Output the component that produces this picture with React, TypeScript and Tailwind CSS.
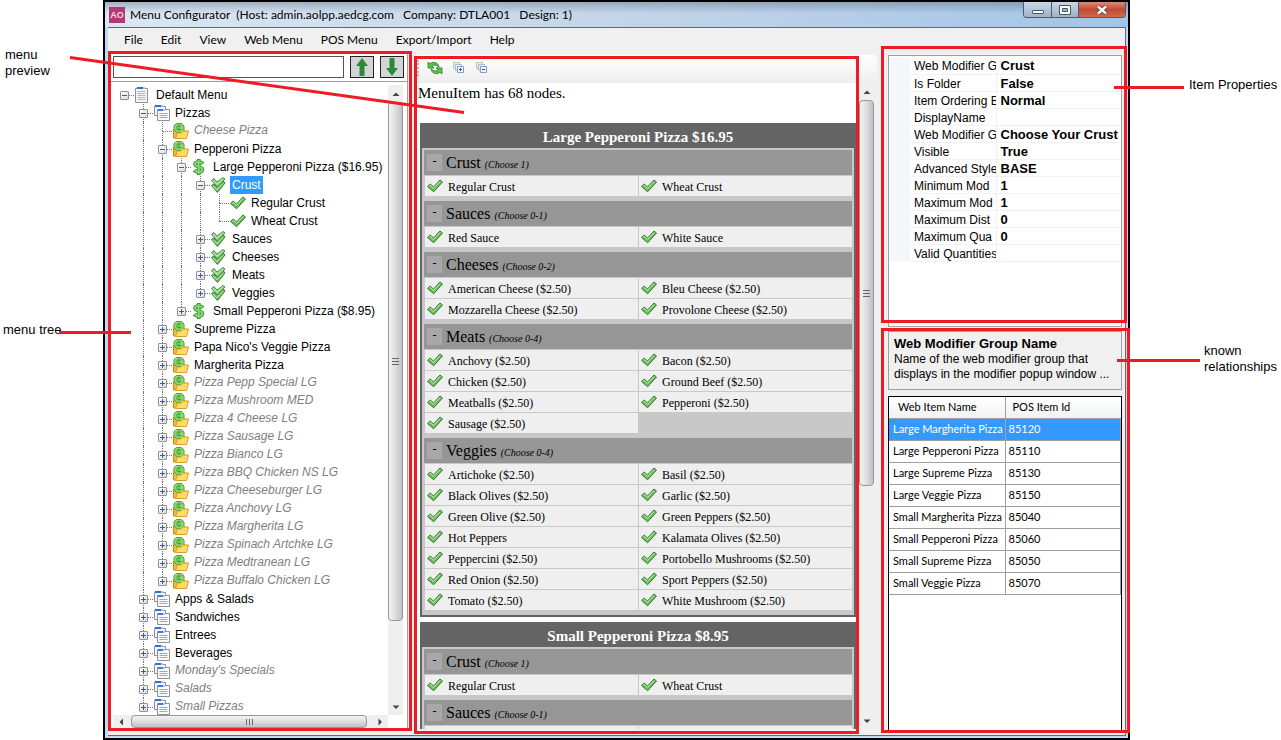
import { useState } from "react";

type IconName = "page" | "pages" | "folder" | "price" | "group" | "item";

interface TreeNode {
  label: string;
  depth: number;
  icon: IconName;
  open?: boolean;
  leaf?: boolean;
  hidden?: boolean;
}

const hiddenPizzas = [
  "Pizza Pepp Special LG",
  "Pizza Mushroom MED",
  "Pizza 4 Cheese LG",
  "Pizza Sausage LG",
  "Pizza Bianco LG",
  "Pizza BBQ Chicken NS LG",
  "Pizza Cheeseburger LG",
  "Pizza Anchovy LG",
  "Pizza Margherita LG",
  "Pizza Spinach Artchke LG",
  "Pizza Medtranean LG",
  "Pizza Buffalo Chicken LG",
];

const tree: TreeNode[] = [
  { label: "Default Menu", depth: 0, icon: "page", open: true },
  { label: "Pizzas", depth: 1, icon: "pages", open: true },
  { label: "Cheese Pizza", depth: 2, icon: "folder", leaf: true, hidden: true },
  { label: "Pepperoni Pizza", depth: 2, icon: "folder", open: true },
  { label: "Large Pepperoni Pizza ($16.95)", depth: 3, icon: "price", open: true },
  { label: "Crust", depth: 4, icon: "group", open: true },
  { label: "Regular Crust", depth: 5, icon: "item", leaf: true },
  { label: "Wheat Crust", depth: 5, icon: "item", leaf: true },
  { label: "Sauces", depth: 4, icon: "group" },
  { label: "Cheeses", depth: 4, icon: "group" },
  { label: "Meats", depth: 4, icon: "group" },
  { label: "Veggies", depth: 4, icon: "group" },
  { label: "Small Pepperoni Pizza ($8.95)", depth: 3, icon: "price" },
  { label: "Supreme Pizza", depth: 2, icon: "folder" },
  { label: "Papa Nico's Veggie Pizza", depth: 2, icon: "folder" },
  { label: "Margherita Pizza", depth: 2, icon: "folder" },
  ...hiddenPizzas.map(
    (label): TreeNode => ({ label, depth: 2, icon: "folder", hidden: true })
  ),
  { label: "Apps & Salads", depth: 1, icon: "pages" },
  { label: "Sandwiches", depth: 1, icon: "pages" },
  { label: "Entrees", depth: 1, icon: "pages" },
  { label: "Beverages", depth: 1, icon: "pages" },
  { label: "Monday's Specials", depth: 1, icon: "pages", hidden: true },
  { label: "Salads", depth: 1, icon: "pages", hidden: true },
  { label: "Small Pizzas", depth: 1, icon: "pages", hidden: true },
];

const crust = { name: "Crust", hint: "(Choose 1)", items: ["Regular Crust", "Wheat Crust"] };
const sauces = { name: "Sauces", hint: "(Choose 0-1)", items: ["Red Sauce", "White Sauce"] };

const cards = [
  {
    title: "Large Pepperoni Pizza $16.95",
    groups: [
      crust,
      sauces,
      {
        name: "Cheeses",
        hint: "(Choose 0-2)",
        items: [
          "American Cheese ($2.50)",
          "Bleu Cheese ($2.50)",
          "Mozzarella Cheese ($2.50)",
          "Provolone Cheese ($2.50)",
        ],
      },
      {
        name: "Meats",
        hint: "(Choose 0-4)",
        items: [
          "Anchovy ($2.50)",
          "Bacon ($2.50)",
          "Chicken ($2.50)",
          "Ground Beef ($2.50)",
          "Meatballs ($2.50)",
          "Pepperoni ($2.50)",
          "Sausage ($2.50)",
        ],
      },
      {
        name: "Veggies",
        hint: "(Choose 0-4)",
        items: [
          "Artichoke ($2.50)",
          "Basil ($2.50)",
          "Black Olives ($2.50)",
          "Garlic ($2.50)",
          "Green Olive ($2.50)",
          "Green Peppers ($2.50)",
          "Hot Peppers",
          "Kalamata Olives ($2.50)",
          "Peppercini ($2.50)",
          "Portobello Mushrooms ($2.50)",
          "Red Onion ($2.50)",
          "Sport Peppers ($2.50)",
          "Tomato ($2.50)",
          "White Mushroom ($2.50)",
        ],
      },
    ],
  },
  { title: "Small Pepperoni Pizza $8.95", groups: [crust, sauces] },
];

const properties = [
  ["Web Modifier G", "Crust"],
  ["Is Folder", "False"],
  ["Item Ordering B", "Normal"],
  ["DisplayName", ""],
  ["Web Modifier G", "Choose Your Crust"],
  ["Visible", "True"],
  ["Advanced Style", "BASE"],
  ["Minimum Mod", "1"],
  ["Maximum Mod", "1"],
  ["Maximum Dist", "0"],
  ["Maximum Qua", "0"],
  ["Valid Quantities", ""],
];

const relations = [
  ["Large Margherita Pizza", "85120"],
  ["Large Pepperoni Pizza", "85110"],
  ["Large Supreme Pizza", "85130"],
  ["Large Veggie Pizza", "85150"],
  ["Small Margherita Pizza", "85040"],
  ["Small Pepperoni Pizza", "85060"],
  ["Small Supreme Pizza", "85050"],
  ["Small Veggie Pizza", "85070"],
];

const CheckIcon = () => (
  <svg width="16" height="16" viewBox="0 0 16 16" className="shrink-0">
    <path d="M.6 8.500 3.200 6 6.500 9 13 2l2.500 2L6.600 13.800z" fill="#6fbd59" stroke="#2f7a33" strokeWidth="1" />
    <path d="M2.300 8.200l1-.8 3.200 3L13.200 3.400" fill="none" stroke="#c8efb6" strokeWidth="1" />
  </svg>
);

const NodeIcon = ({ name }: { name: IconName }) => {
  if (name === "item") return <CheckIcon />;
  return (
    <svg width="16" height="16" viewBox="0 0 16 16" className="shrink-0">
      {name === "page" && (
        <>
          <path d="M.5 1.500h12v14H.5z" fill="#f6f6f6" stroke="#8d9094" />
          <path d="M2 0h6v2H2z" fill="#2f6fdb" />
          <path d="M8 0h2v2H8z" fill="#a9c8f2" />
          <path d="M2.500 4.500h8M2.500 6.500h8M2.500 8.500h8M2.500 10.500h8M2.500 12.500h8" stroke="#b4b7bb" />
        </>
      )}
      {name === "pages" && (
        <>
          <path d="M.5 1.500h11v9H.5z" fill="#f4f4f4" stroke="#8d9094" />
          <path d="M1 0h6v2H1z" fill="#2f6fdb" />
          <path d="M7 0h2v2H7z" fill="#a9c8f2" />
          <path d="M3.500 4.500h12v11h-12z" fill="#fafafa" stroke="#8d9094" />
          <path d="M4 4h5v2H4z" fill="#3a7ce2" />
          <path d="M9 4h2v2H9z" fill="#a9c8f2" />
          <path d="M5.500 8.500h8M5.500 10.500h8M5.500 12.500h8" stroke="#a4a8ad" />
        </>
      )}
      {name === "folder" && (
        <>
          <path d="M.5 15V6.500h5l1 1.500h6v7z" fill="#f0b93c" stroke="#c8891c" />
          <path d="M1 2.500 3.500.5h5L11 3v5L8.500 9.500H4L1 7z" fill="#8bdb69" stroke="#4ea341" />
          <path d="M8.500 3H4v3.500h4.500M6 1.500v6.500" fill="none" stroke="#3f9237" strokeWidth=".8" />
          <path d="M2.500 15.500 4.500 10h3.500l1-2h6.500l-2 7.500z" fill="#ffdc68" stroke="#d9a02b" />
        </>
      )}
      {name === "price" && (
        <>
          <path
            d="M11 4.800C9.500 2.800 3 2.300 3 5.300 3 8.200 10.500 7.500 10.500 10.600 10.500 13.700 4 13.500 2 11.300M6.700 0v16"
            fill="none"
            stroke="#3f9a3a"
            strokeWidth="3.800"
          />
          <path
            d="M10.500 4.500C9 3 3 2.300 3 5.300 3 8.200 10.500 7.500 10.500 10.600 10.500 13.700 4.500 13.500 2.500 11.500M6.700 1v14"
            fill="none"
            stroke="#86d873"
            strokeWidth="1.800"
          />
        </>
      )}
      {name === "group" && (
        <>
          <path d="M.5 8.500 3 7l3 3 6.500-6L14 6l-7.500 9.500z" fill="#6bb95c" stroke="#3a8539" />
          <path d="M.5 3.500 3 1.500l3 3.500L12 .5 14 2 6.500 10z" fill="#8fcf7f" stroke="#4a9148" />
          <path d="M2 3.500 6 7.300l6-5.800M2 9 6 12.800l6-6.500" fill="none" stroke="#cdeec0" />
        </>
      )}
    </svg>
  );
};

// does the branch at this level carry on below the given row?
const continues = (row: number, level: number) => {
  const next = tree.slice(row + 1).find((n) => n.depth <= level);
  return !!next && next.depth === level;
};

const TreeRow = ({
  node,
  row,
  selected,
  onSelect,
}: {
  node: TreeNode;
  row: number;
  selected: boolean;
  onSelect: () => void;
}) => {
  const levels = Array.from({ length: node.depth }, (_, i) => i);
  return (
    <li className="flex h-[18px] items-center">
      {levels.map((level) => (
        <span key={level} className="flex h-full w-[19px] shrink-0 justify-center">
          {continues(row, level) && <span className="border-l border-dotted border-gray-500" />}
        </span>
      ))}
      <span className="relative flex h-full w-[19px] shrink-0 items-center justify-center">
        {node.depth > 0 && (
          <span className="absolute top-0 left-[9px] h-1/2 border-l border-dotted border-gray-500" />
        )}
        {continues(row, node.depth) && (
          <span className="absolute bottom-0 left-[9px] h-1/2 border-l border-dotted border-gray-500" />
        )}
        <span className="absolute top-[9px] right-0 left-[9px] border-t border-dotted border-gray-500" />
        {!node.leaf && (
          <button
            aria-label={node.open ? "Collapse" : "Expand"}
            className="relative block size-[9px] rounded-[1px] border border-[#919191] bg-gradient-to-br from-white to-[#dcdcdc]"
          >
            <svg viewBox="0 0 7 7" className="block size-[7px]">
              <path d={node.open ? "M1 3.500h5" : "M1 3.500h5M3.500 1v5"} stroke="#3b5a9a" />
            </svg>
          </button>
        )}
      </span>
      <span className="ml-px flex pb-px">
        <NodeIcon name={node.icon} />
      </span>
      <button
        onClick={onSelect}
        className={`ml-[3px] px-0.5 text-xs leading-[18px] whitespace-nowrap ${
          selected ? "bg-[#3399ff] text-white" : node.hidden ? "pb-0.5 text-[#808080] italic" : "text-black"
        }`}
      >
        {node.label}
      </button>
    </li>
  );
};

const Arrow = ({ dir }: { dir: "up" | "down" | "left" | "right" }) => {
  const d = {
    up: "M.5 6 4 2.500 7.500 6z",
    down: "M.5 2.500h7L4 6z",
    left: "M6 .5v7L2.500 4z",
    right: "M2.500.5v7L6 4z",
  }[dir];
  return (
    <button aria-label={`Scroll ${dir}`} className="flex size-4 shrink-0 items-center justify-center">
      <svg width="8" height="8" viewBox="0 0 8 8">
        <path d={d} fill="#444" />
      </svg>
    </button>
  );
};

const VScroll = ({ thumb }: { thumb: string }) => (
  <div className="flex w-[15px] shrink-0 flex-col items-center bg-[#efefef] pt-px">
    <Arrow dir="up" />
    <div className="w-full flex-1">
      <div
        className={`flex w-full flex-col items-center justify-center gap-0.5 rounded-sm border border-[#979797] bg-gradient-to-r from-[#f4f4f4] via-[#dedee0] to-[#c0c0c6] ${thumb}`}
      >
        <span className="h-px w-[7px] bg-[#666]" />
        <span className="h-px w-[7px] bg-[#666]" />
        <span className="h-px w-[7px] bg-[#666]" />
      </div>
    </div>
    <Arrow dir="down" />
  </div>
);

const Frame = ({ className }: { className: string }) => (
  <div className={`pointer-events-none absolute z-10 border-3 border-[#ed1c24] ${className}`} />
);

const TitleBar = () => (
  <header className="flex h-[25px] justify-between bg-[linear-gradient(to_bottom,rgba(80,98,120,0.4),transparent_45%),linear-gradient(to_right,#dbe7f3,#c3d5e8_50%,#a3c4e8)]">
    <div className="flex items-center gap-[5px] pl-1">
      <span className="flex size-4 items-center justify-center bg-[#b03a74] text-[9px] font-bold text-[#f5d5e5]">
        AO
      </span>
      <h1 className="font-[Lato,sans-serif] text-xs whitespace-pre text-black">
        {"Menu Configurator  (Host: admin.aolpp.aedcg.com   Company: DTLA001   Design: 1)"}
      </h1>
    </div>
    <div className="mr-0.5 flex h-4 overflow-hidden rounded-b-[4px] border border-t-0 border-[#4c5b6b]">
      <button
        aria-label="Minimize"
        className="flex w-7 items-center justify-center border-r border-[#4c5b6b] bg-gradient-to-b from-[#c8d6e6] to-[#9db3ca]"
      >
        <span className="mt-1 h-1 w-3 rounded-[1px] border border-[#4c5662] bg-white" />
      </button>
      <button
        aria-label="Maximize"
        className="flex w-[27px] items-center justify-center border-r border-[#4c5b6b] bg-gradient-to-b from-[#c8d6e6] to-[#9db3ca]"
      >
        <svg width="12" height="10" viewBox="0 0 12 10">
          <path d="M.5.5h11v9H.5z" fill="#fff" stroke="#4c5662" />
          <path d="M3.500 3.500h5v3h-5z" fill="#9db3ca" stroke="#4c5662" />
        </svg>
      </button>
      <button
        aria-label="Close"
        className="flex w-[46px] items-center justify-center bg-gradient-to-b from-[#d98c78] via-[#c04a33] to-[#cf6a4a]"
      >
        <svg width="12" height="10" viewBox="0 0 12 10">
          <path d="M2 1.500l8 7M10 1.500l-8 7" stroke="#5a3030" strokeWidth="4" />
          <path d="M2 1.500l8 7M10 1.500l-8 7" stroke="#fff" strokeWidth="2.400" />
        </svg>
      </button>
    </div>
  </header>
);

const menus = ["File", "Edit", "View", "Web Menu", "POS Menu", "Export/Import", "Help"];

const MenuBar = () => (
  <nav className="flex h-[23px] shrink-0 items-center gap-[18px] pl-4 font-[Lato,sans-serif] text-xs text-black">
    {menus.map((menu) => (
      <button key={menu}>{menu}</button>
    ))}
  </nav>
);

const SearchArrow = ({ down }: { down?: boolean }) => (
  <button
    aria-label={down ? "Find next" : "Find previous"}
    className="flex h-[22px] w-6 items-center justify-center border border-[#222] bg-[#d3d3d8]"
  >
    <svg width="14" height="20" viewBox="0 0 14 20" className={down ? "rotate-180" : ""}>
      <path d="M7 1 13 9H9.500v10h-5V9H1z" fill="#2a8a35" />
    </svg>
  </button>
);

const TreePane = () => {
  const [selected, setSelected] = useState("Crust");
  const [query, setQuery] = useState("");

  return (
    <aside className="relative mb-1 flex w-[304px] shrink-0 flex-col bg-[#f0f0f0]">
      <div className="mr-1 flex min-h-0 flex-1 flex-col border-r border-[#a0a0a0] bg-white">
        <div className="flex gap-1.5 border-b border-[#a0a0a0] pt-[5px] pr-[3px] pb-[3px] pl-[5px]">
          <input
            aria-label="Find in menu"
            value={query}
            onChange={(e) => setQuery(e.target.value)}
            className="h-[22px] min-w-0 flex-1 border border-[#555] bg-white px-1 text-xs outline-none"
          />
          <SearchArrow />
          <SearchArrow down />
        </div>
        <div className="flex min-h-0 flex-1 pt-[3px] pr-1">
          <ul className="min-w-0 flex-1 overflow-hidden pt-px pl-[7px]">
            {tree.map((node, i) => (
              <TreeRow
                key={node.label}
                node={node}
                row={i}
                selected={selected === node.label}
                onSelect={() => setSelected(node.label)}
              />
            ))}
          </ul>
          <VScroll thumb="h-[87%]" />
        </div>
        <div className="mb-[3px] ml-[5px] flex h-[13px] items-center pr-[19px]">
          <div className="flex h-full flex-1 items-center bg-[#efefef]">
            <Arrow dir="left" />
            <div className="h-full flex-1 pl-0.5">
              <div className="flex h-full w-[98%] items-center justify-center gap-0.5 rounded-sm border border-[#979797] bg-gradient-to-b from-[#f4f4f4] via-[#dedee0] to-[#c0c0c6]">
                <span className="h-1.5 w-px bg-[#666]" />
                <span className="h-1.5 w-px bg-[#666]" />
                <span className="h-1.5 w-px bg-[#666]" />
              </div>
            </div>
            <Arrow dir="right" />
          </div>
        </div>
      </div>
      <Frame className="inset-0" />
    </aside>
  );
};

const StackIcon = ({ plus }: { plus?: boolean }) => (
  <svg width="12" height="12" viewBox="0 0 12 12" className="block">
    <path d="M.5.5h6v6h-6z" fill="#e9f0e6" stroke="#b5c7c2" />
    <path d="M2.500 2.500h6v6h-6z" fill="#e6eef6" stroke="#a9bcd2" />
    <path d="M4.500 4.500h6v6h-6z" fill="#f5f9ff" stroke="#7f9fca" />
    <path d={plus ? "M6 7.500h3M7.500 6v3" : "M6 7.500h3"} stroke="#2c5aa0" />
  </svg>
);

const Preview = () => (
  <section className="relative mt-1 mb-px ml-0.5 flex min-w-0 flex-1 flex-col bg-[#f0f0f0] pl-[3px]">
    <div className="flex h-7 shrink-0 items-center gap-3 rounded-tr-sm bg-gradient-to-b from-white to-[#eeeeee] pb-0.5">
      <span className="h-4 border-l-2 border-dotted border-[#b5b5b5]" />
      <button aria-label="Refresh" className="-ml-1">
        <svg width="16" height="14" viewBox="0 0 16 14" className="block">
          <path d="M1 1v6h6L5 5.200C7 3.500 10 3.800 12 6.500 12 2 6.500-.5 3 2.800z" fill="#5fc050" stroke="#2f7f30" strokeWidth=".8" />
          <path d="M15 13V7H9l2 1.800C9 10.500 6 10.200 4 7.500c0 4.500 5.500 7 9 3.700z" fill="#5fc050" stroke="#2f7f30" strokeWidth=".8" />
        </svg>
      </button>
      <button aria-label="Expand all" className="-ml-0.5">
        <StackIcon plus />
      </button>
      <button aria-label="Collapse all" className="-ml-px">
        <StackIcon />
      </button>
    </div>
    <div className="mb-[5px] flex min-h-0 flex-1 pr-[3px]">
      <div className="min-w-0 flex-1 overflow-hidden bg-white px-[3px] font-['Liberation_Serif',serif] text-black">
        <p className="-ml-0.5 h-10 text-[15px] leading-5">MenuItem has 68 nodes.</p>
        {cards.map((card) => (
          <article key={card.title} className="mb-[5px] border-2 border-t-0 border-[#646464] bg-[#c8c8c8]">
            <h2 className="h-[25px] bg-[#646464] pt-0.5 text-center text-[15px] leading-6 font-bold text-white">
              {card.title}
            </h2>
            <div className="border-x-2 border-t-2 border-[#c8c8c8]">
              {card.groups.map((group) => (
                <div key={group.name} className="pb-[5px]">
                  <h3 className="flex h-[25px] items-center gap-1 bg-[#969696] pl-[3px] text-base">
                    <button
                      aria-label={`Collapse ${group.name}`}
                      className="h-[17px] w-[15px] bg-[#a8a8a8] pb-1 text-xs leading-3"
                    >
                      -
                    </button>
                    <span>
                      {group.name} <i className="text-[10px]">{group.hint}</i>
                    </span>
                  </h3>
                  <ul className="grid grid-cols-2 gap-px pt-px pl-px">
                    {group.items.map((item) => (
                      <li key={item} className="flex h-5 items-center gap-[5px] bg-[#efefef] pl-0.5 text-xs">
                        <span className="flex pb-px">
                          <CheckIcon />
                        </span>
                        <span className="pt-0.5">{item}</span>
                      </li>
                    ))}
                  </ul>
                </div>
              ))}
            </div>
          </article>
        ))}
      </div>
      <VScroll thumb="h-[63%]" />
    </div>
    <Frame className="top-px right-[18px] bottom-0 left-0" />
  </section>
);

const ItemProperties = () => (
  <section className="relative h-[276px] shrink-0 pt-1 pr-[3px] pl-[7px]">
    <div className="h-full border border-[#a0a0a0] bg-white pt-px">
      <table className="w-full table-fixed border-collapse text-black">
        <tbody>
          {properties.map(([name, value], i) => (
            <tr key={i} className="h-[17px]">
              <td className="w-[21px] bg-[#f4f7fc] p-0" />
              <th
                scope="row"
                className="w-[86px] border-r border-b border-[#f0f2fa] p-0 pt-0.5 pl-1 text-left text-xs leading-[14px] font-normal whitespace-nowrap"
              >
                <div className="overflow-hidden">{name}</div>
              </th>
              <td className="border-b border-[#f0f2fa] p-0 pt-0.5 pl-1 text-[13px] leading-[14px] font-bold whitespace-nowrap">
                {value}
              </td>
            </tr>
          ))}
        </tbody>
      </table>
    </div>
    <Frame className="-top-[5px] -right-0.5 bottom-1 left-0" />
  </section>
);

const Relationships = () => (
  <section className="relative mb-0.5 flex min-h-0 flex-1 flex-col pt-1 pr-[3px] pb-[3px] pl-[7px] text-black">
    <div className="h-[59px] shrink-0 border border-[#a0a0a0] px-[5px] pt-1">
      <h2 className="text-[13px] leading-4 font-bold">Web Modifier Group Name</h2>
      <p className="text-xs leading-[15px]">
        Name of the web modifier group that
        <br />
        displays in the modifier popup window ...
      </p>
    </div>
    <div className="mt-1.5 min-h-0 flex-1 border border-b-0 border-black bg-white">
      <table className="w-full table-fixed border-collapse font-[Lato,sans-serif] text-[11px]">
        <thead>
          <tr className="h-[21px] bg-gradient-to-b from-white to-[#f1f2f4]">
            <th className="w-[116px] border-r border-b border-[#a0a0a0] p-0 pl-[9px] text-left font-normal">
              Web Item Name
            </th>
            <th className="border-b border-[#a0a0a0] p-0 pl-[7px] text-left font-normal">POS Item Id</th>
          </tr>
        </thead>
        <tbody>
          {relations.map(([name, id], i) => (
            <tr key={id} className={`h-[22px] ${i === 0 ? "bg-[#3399ff] text-white" : "bg-white"}`}>
              <td className="border border-l-0 border-[#a0a0a0] p-0 pl-1 whitespace-nowrap">{name}</td>
              <td className="border border-[#a0a0a0] p-0 pl-[3px]">{id}</td>
            </tr>
          ))}
        </tbody>
      </table>
    </div>
    <Frame className="top-px -right-[5px] bottom-0 left-0" />
  </section>
);

const App = () => {
  return (
    <div className="relative flex h-screen overflow-hidden bg-white font-['Liberation_Sans',Arial,sans-serif] text-[13px] leading-4 text-black">
      <aside className="w-[103px] shrink-0 pt-[47px]">
        <p className="pl-[5px]">
          menu
          <br />
          preview
        </p>
        <p className="mt-[243px] pl-[3px]">menu tree</p>
      </aside>

      <div className="flex min-w-0 flex-1 flex-col border-2 border-black bg-[#c3daf3]">
        <TitleBar />
        <div className="mr-0.5 mb-0.5 ml-[3px] flex min-h-0 flex-1 flex-col border-t border-r border-b border-[#5b6b7c] bg-[#f0f0f0]">
          <MenuBar />
          <main className="flex min-h-0 flex-1">
            <TreePane />
            <Preview />
            <div className="ml-1 flex w-[244px] shrink-0 flex-col">
              <ItemProperties />
              <Relationships />
            </div>
          </main>
        </div>
      </div>

      <aside className="w-[151px] shrink-0 pt-[77px]">
        <p className="pl-[59px]">Item Properties</p>
        <p className="mt-[250px] pl-[74px]">
          known
          <br />
          relationships
        </p>
      </aside>

      {/* callout lines */}
      <svg className="pointer-events-none absolute top-0 left-0 z-20" width="480" height="340">
        <path d="M70 57.500 464 112.500M59 332.500h72" stroke="#ed1c24" strokeWidth="3" />
      </svg>
      <svg className="pointer-events-none absolute top-0 right-0 z-20" width="171" height="370">
        <path d="M4 87.500h70M7 360.500h83" stroke="#ed1c24" strokeWidth="3" />
      </svg>
    </div>
  );
};

export default App;
